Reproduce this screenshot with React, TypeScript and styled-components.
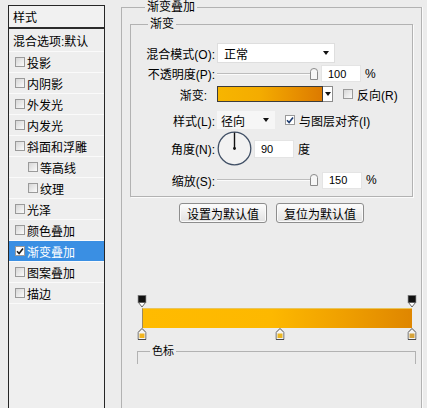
import React from "react";
import styled, { createGlobalStyle } from "styled-components";

const GlobalStyle = createGlobalStyle`
  html, body {
    margin: 0;
    padding: 0;
  }
  body {
    width: 427px;
    height: 408px;
    overflow: hidden;
    background: #ececec;
    font-family: "Liberation Sans", "Noto Sans CJK SC", sans-serif;
    font-size: 12px;
    color: #000;
  }
`;

const Page = styled.div`
  display: flex;
  align-items: flex-start;
  height: 408px;
`;

/* ---------- left list of layer styles ---------- */

const StylePanel = styled.div`
  margin: 5px 0 0 8px;
  width: 97px;
  height: 403px;
  box-sizing: border-box;
  border: 1px solid #262626;
  border-bottom: none;
  background: #efefef;
  flex-shrink: 0;
`;

const PanelHeader = styled.div`
  height: 23px;
  box-sizing: border-box;
  padding-left: 4px;
  display: flex;
  align-items: center;
  border-bottom: 2px solid #2c2c2c;
  background: #f1f1f1;
`;

const StyleRow = styled.div<{ $active?: boolean; $indent?: number; $height?: number }>`
  height: ${p => p.$height ?? 21}px;
  box-sizing: border-box;
  display: flex;
  align-items: center;
  gap: 2px;
  padding-left: ${p => p.$indent ?? 6}px;
  border-bottom: 1px solid #fafafa;
  background: ${p => (p.$active ? "#3a8fe3" : "#eeeeee")};
  color: ${p => (p.$active ? "#fff" : "#000")};
  white-space: nowrap;
`;

const CheckBox = styled.span<{ $white?: boolean }>`
  width: 10px;
  height: 10px;
  box-sizing: border-box;
  border: 1px solid #9a9a9a;
  background: ${p => (p.$white ? "#fff" : "linear-gradient(135deg, #d6d6d6, #fbfbfb)")};
  display: inline-flex;
  align-items: center;
  justify-content: center;
  flex-shrink: 0;
`;

const Check: React.FC<{ color?: string }> = ({ color = "#1d1d1d" }) => (
  <svg width="8" height="8" viewBox="0 0 8 8">
    <path d="M1 4.2 L3.1 6.5 L7 1.4" fill="none" stroke={color} strokeWidth="1.6" />
  </svg>
);

/* ---------- right side ---------- */

const RightColumn = styled.div`
  margin-left: 16px;
  display: flex;
  flex-direction: column;
`;

const GroupBox = styled.fieldset<{ $width: number; $height?: number }>`
  margin: 0;
  padding: 0 8px;
  min-width: 0;
  width: ${p => p.$width}px;
  ${p => (p.$height ? `height: ${p.$height}px;` : "")}
  box-sizing: border-box;
  border: 1px solid #b2b2b2;
  border-bottom: none;
  box-shadow: 1px 0 0 #fbfbfb;
`;

const GroupLegend = styled.legend<{ $offset: number; $small?: boolean }>`
  margin-left: ${p => p.$offset}px;
  padding: 0 2px;
  font-size: ${p => (p.$small ? 11 : 12)}px;
  line-height: ${p => (p.$small ? 12 : 14)}px;
`;

const InnerGroup = styled.fieldset`
  margin: 3px 0 0;
  padding: 12px 0 8px;
  min-width: 0;
  border: 1px solid #b2b2b2;
  box-shadow: 1px 1px 0 #fbfbfb;
`;

const FormRow = styled.div<{ $top: number; $h: number }>`
  display: flex;
  align-items: center;
  margin-top: ${p => p.$top}px;
  height: ${p => p.$h}px;
`;

const Label = styled.span<{ $pad?: number }>`
  width: 84px;
  box-sizing: border-box;
  padding-right: ${p => p.$pad ?? 0}px;
  text-align: right;
  flex-shrink: 0;
  margin-right: 2px;
  white-space: nowrap;
`;

const Select = styled.div<{ $width: number; $plain?: boolean }>`
  width: ${p => p.$width}px;
  height: ${p => (p.$plain ? 18 : 20)}px;
  box-sizing: border-box;
  display: flex;
  align-items: center;
  justify-content: space-between;
  padding: 0 5px 0 ${p => (p.$plain ? 3 : 6)}px;
  background: ${p => (p.$plain ? "#f6f6f6" : "#fff")};
  border: 1px solid ${p => (p.$plain ? "#f6f6f6" : "#dedede")};
`;

const Arrow = styled.span`
  width: 0;
  height: 0;
  border-left: 3.5px solid transparent;
  border-right: 3.5px solid transparent;
  border-top: 4px solid #111;
`;

const Slider = styled.div`
  position: relative;
  width: 101px;
  height: 14px;
  display: flex;
  align-items: center;
  flex-shrink: 0;
`;

const Track = styled.div`
  width: 94px;
  height: 2px;
  box-sizing: border-box;
  border-top: 1px solid #bdbdbd;
  border-bottom: 1px solid #fbfbfb;
`;

const Thumb = styled.svg`
  position: absolute;
  left: 93px;
  top: 1px;
`;

const NumField = styled.div<{ $gap?: number; $h?: number }>`
  margin-left: ${p => p.$gap ?? 3}px;
  width: 40px;
  height: ${p => p.$h ?? 17}px;
  box-sizing: border-box;
  padding-left: 6px;
  display: flex;
  align-items: center;
  background: #fff;
  border: 1px solid #e4e4e4;
  font-size: 11px;
`;

const Unit = styled.span`
  margin-left: 4px;
`;

const GradientSwatch = styled.div`
  width: 106px;
  height: 16px;
  box-sizing: border-box;
  border: 1px solid #3c3c3c;
  background: linear-gradient(to right, #f7b500 0%, #f4ac00 40%, #e78f00 75%, #dc7a00 100%);
`;

const SwatchButton = styled.div`
  width: 10px;
  height: 16px;
  box-sizing: border-box;
  border: 1px solid #8c8c8c;
  border-left: none;
  background: #fff;
  display: flex;
  align-items: center;
  justify-content: center;
`;

const Option = styled.label<{ $gap: number }>`
  margin-left: ${p => p.$gap}px;
  display: flex;
  align-items: center;
  gap: 4px;
  white-space: nowrap;
`;

const ButtonRow = styled.div`
  margin-top: 6px;
  display: flex;
  justify-content: center;
  gap: 9px;
`;

const Button = styled.button`
  width: 88px;
  height: 20px;
  padding: 0;
  box-sizing: border-box;
  border: 1px solid #8d8d8d;
  border-radius: 3px;
  background: linear-gradient(#fdfdfd, #e1e1e1);
  box-shadow: inset 0 0 0 1px #fafafa;
  font-family: "Noto Sans CJK SC", sans-serif;
  font-size: 12px;
  color: #000;
  display: flex;
  align-items: center;
  justify-content: center;
`;

/* ---------- gradient editor ---------- */

const Editor = styled.div`
  margin: 72px 0 0 12px;
  width: 270px;
  display: flex;
  flex-direction: column;
`;

const StopLane = styled.div<{ $h: number }>`
  position: relative;
  height: ${p => p.$h}px;
`;

const Stop = styled.svg`
  position: absolute;
  top: 0;
  transform: translateX(-50%);
`;

const GradientBar = styled.div`
  height: 20px;
  box-sizing: border-box;
  border-left: 1px solid #9b8a60;
  border-top: 1px solid #e9c45a;
  background: linear-gradient(to right, #ffbb00 0%, #fdb800 48%, #ef9f00 75%, #df8600 100%);
`;

const StopsBox = styled.fieldset`
  margin: 5px 0 0 7px;
  padding: 0;
  width: 279px;
  height: 19px;
  box-sizing: border-box;
  min-width: 0;
  border: 1px solid #b2b2b2;
  border-bottom: none;
`;

const Dial: React.FC = () => (
  <svg width="35" height="35" viewBox="0 0 35 35" style={{ flexShrink: 0 }}>
    <circle cx="17.5" cy="17.5" r="16.3" fill="#f2f2f2" stroke="#415066" strokeWidth="1.3" />
    <line x1="17.5" y1="17.5" x2="17.5" y2="1.5" stroke="#111" strokeWidth="1.4" />
    <circle cx="17.5" cy="17.5" r="1.4" fill="#111" />
  </svg>
);

const SliderThumb: React.FC = () => (
  <Thumb width="8" height="12" viewBox="0 0 8 12">
    <path d="M0.5 11.5 L0.5 3.5 Q0.5 0.5 4 0.5 Q7.5 0.5 7.5 3.5 L7.5 11.5 Z" fill="#f6f6f6" stroke="#8a8a8a" />
  </Thumb>
);

const opacityStops = [0, 100];
const colorStops = [
  { pos: 0, color: "#f2b51e" },
  { pos: 51, color: "#eab522" },
  { pos: 100, color: "#d7a43a" },
];

const layerStyles = [
  { name: "投影" },
  { name: "内阴影" },
  { name: "外发光" },
  { name: "内发光" },
  { name: "斜面和浮雕" },
  { name: "等高线", sub: true },
  { name: "纹理", sub: true },
  { name: "光泽" },
  { name: "颜色叠加" },
  { name: "渐变叠加", checked: true },
  { name: "图案叠加" },
  { name: "描边" },
];

export default function App() {
  return (
    <>
      <GlobalStyle />
      <Page>
        <StylePanel>
          <PanelHeader>样式</PanelHeader>
          <StyleRow $indent={4} $height={23}>
            混合选项:默认
          </StyleRow>
          {layerStyles.map(item => (
            <StyleRow key={item.name} $active={item.checked} $indent={item.sub ? 19 : 6}>
              <CheckBox $white={item.checked}>{item.checked && <Check />}</CheckBox>
              {item.name}
            </StyleRow>
          ))}
        </StylePanel>

        <RightColumn>
          <GroupBox $width={301} $height={408}>
            <GroupLegend $offset={15}>渐变叠加</GroupLegend>
            <InnerGroup>
              <GroupLegend $offset={17}>渐变</GroupLegend>

              <FormRow $top={0} $h={20}>
                <Label>混合模式(O):</Label>
                <Select $width={118}>
                  正常
                  <Arrow />
                </Select>
              </FormRow>

              <FormRow $top={2} $h={17}>
                <Label>不透明度(P):</Label>
                <Slider>
                  <Track />
                  <SliderThumb />
                </Slider>
                <NumField>100</NumField>
                <Unit>%</Unit>
              </FormRow>

              <FormRow $top={4} $h={16}>
                <Label $pad={8}>渐变:</Label>
                <GradientSwatch />
                <SwatchButton>
                  <Arrow />
                </SwatchButton>
                <Option $gap={10}>
                  <CheckBox />
                  反向(R)
                </Option>
              </FormRow>

              <FormRow $top={9} $h={18}>
                <Label>样式(L):</Label>
                <Select $width={58} $plain>
                  径向
                  <Arrow />
                </Select>
                <Option $gap={10}>
                  <CheckBox $white>
                    <Check color="#1f3d70" />
                  </CheckBox>
                  与图层对齐(I)
                </Option>
              </FormRow>

              <FormRow $top={2} $h={35}>
                <Label>角度(N):</Label>
                <Dial />
                <NumField $gap={2} $h={18}>
                  90
                </NumField>
                <Unit>度</Unit>
              </FormRow>

              <FormRow $top={6} $h={16}>
                <Label>缩放(S):</Label>
                <Slider>
                  <Track />
                  <SliderThumb />
                </Slider>
                <NumField $gap={4}>150</NumField>
                <Unit>%</Unit>
              </FormRow>
            </InnerGroup>

            <ButtonRow>
              <Button>设置为默认值</Button>
              <Button>复位为默认值</Button>
            </ButtonRow>

            <Editor>
              <StopLane $h={13}>
                {opacityStops.map(pos => (
                  <Stop key={pos} width="9" height="13" viewBox="0 0 9 13" style={{ left: `${pos}%` }}>
                    <rect x="0.5" y="0.5" width="8" height="7" fill="#111" stroke="#777" />
                    <path d="M1 7.5 L8 7.5 L4.5 12 Z" fill="#fff" stroke="#555" strokeWidth="0.9" />
                  </Stop>
                ))}
              </StopLane>
              <GradientBar />
              <StopLane $h={12}>
                {colorStops.map(s => (
                  <Stop key={s.pos} width="9" height="12" viewBox="0 0 9 12" style={{ left: `${s.pos}%` }}>
                    <path d="M4.5 0.5 L8.5 4.5 L8.5 11.5 L0.5 11.5 L0.5 4.5 Z" fill="#f4f4f4" stroke="#4a4a4a" />
                    <rect x="2" y="5.5" width="5" height="4.5" fill={s.color} />
                  </Stop>
                ))}
              </StopLane>
            </Editor>

            <StopsBox>
              <GroupLegend $offset={12} $small>
                色标
              </GroupLegend>
            </StopsBox>
          </GroupBox>
        </RightColumn>
      </Page>
    </>
  );
}
